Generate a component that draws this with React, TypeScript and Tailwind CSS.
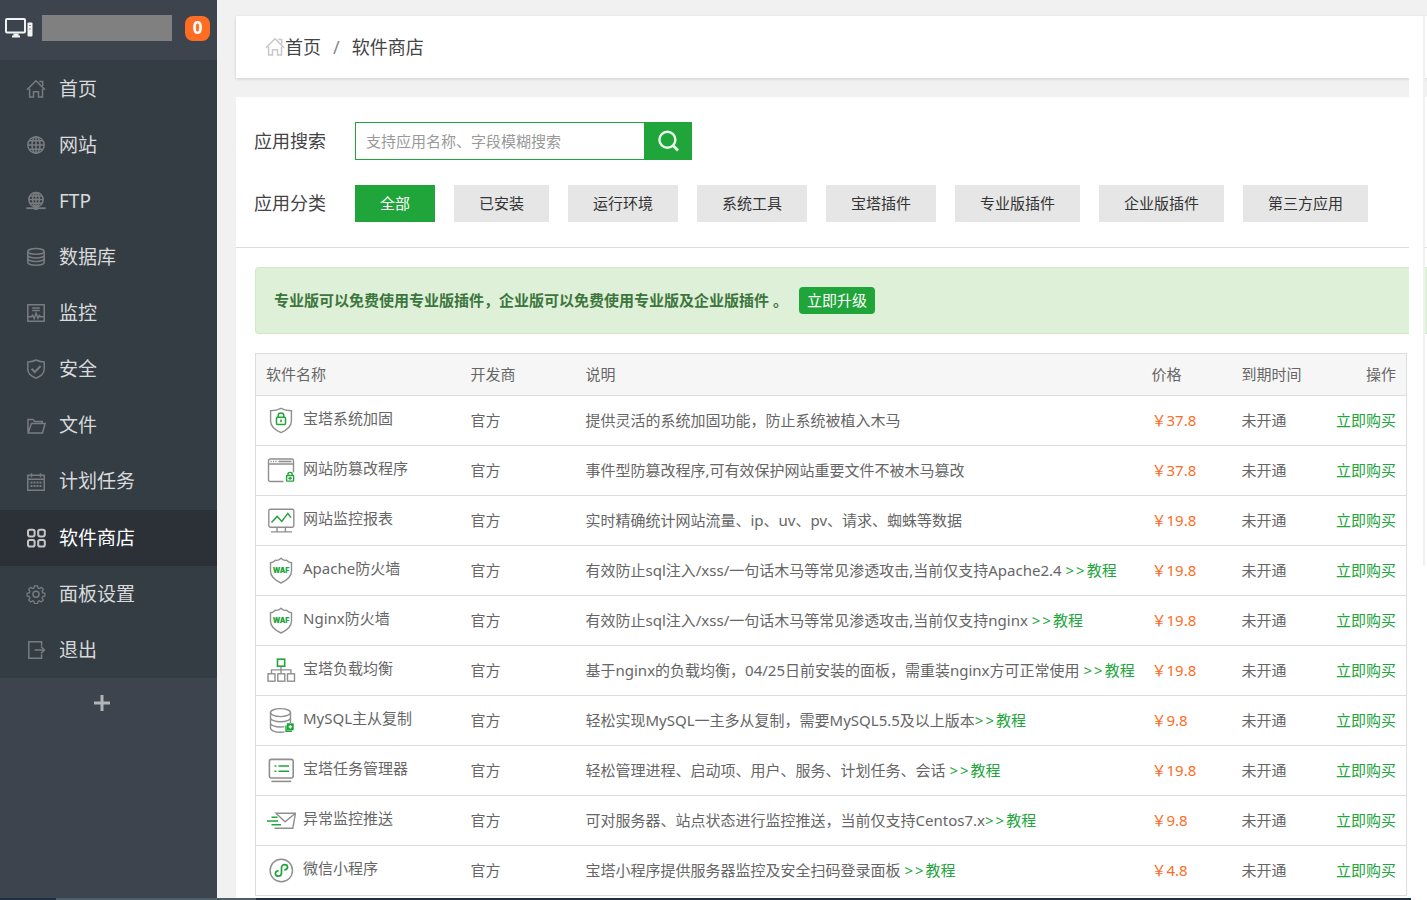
import type { ReactNode } from "react";

type IconProps = { children: ReactNode; className?: string };

function NavIcon({ children, className = "" }: IconProps) {
  return (
    <svg
      viewBox="0 0 20 20"
      width="20"
      height="20"
      fill="none"
      stroke="currentColor"
      strokeWidth="1.5"
      aria-hidden="true"
      className={`shrink-0 ${className}`}
    >
      {children}
    </svg>
  );
}

function HomeGlyph() {
  return (
    <path d="M1 10.800 10 1.800l9 9M13.300 2.500h3.400v4.600M3.600 9.800v8.300h3.900v-5.300h5v5.300h4V9.800" />
  );
}

function GlobeGlyph() {
  return (
    <>
      <circle cx="10" cy="10" r="8.2" />
      <ellipse cx="10" cy="10" rx="4" ry="8.2" />
      <path d="M10 1.800v16.400M1.800 10h16.400M3 5.800h14M3 14.200h14" />
    </>
  );
}

const navItems: { label: string; icon: ReactNode; active?: boolean }[] = [
  { label: "首页", icon: <HomeGlyph /> },
  { label: "网站", icon: <GlobeGlyph /> },
  {
    label: "FTP",
    icon: (
      <>
        <circle cx="10" cy="8.6" r="7.2" />
        <ellipse cx="10" cy="8.6" rx="3.3" ry="7.2" />
        <path d="M10 1.4v14.4M2.800 8.600h14.400M4 5h12M4 12.200h12" />
        <path d="M.4 17.200h19.200" strokeWidth="1.8" />
        <path d="M8.200 17.200h3.600" strokeWidth="3.4" />
      </>
    ),
  },
  {
    label: "数据库",
    icon: (
      <>
        <ellipse cx="10" cy="4.400" rx="8.200" ry="2.800" />
        <path d="M1.800 4.400v10.800c0 1.700 3.700 3 8.200 3s8.200-1.300 8.200-3V4.400M1.800 8c0 1.700 3.700 3 8.200 3s8.200-1.300 8.200-3M1.800 11.600c0 1.700 3.700 3 8.200 3s8.200-1.300 8.200-3" />
      </>
    ),
  },
  {
    label: "监控",
    icon: (
      <>
        <path d="M1.800 1.800h16.400v16.400H1.800zM6.200 5h7.600M6.200 7.400h7.600" />
        <path d="M2 13.800h3.400l1.200-1.600 1.600 3.400 1.900-5.400 1.900 5 1.400-2.600 1 1.200H18" />
      </>
    ),
  },
  {
    label: "安全",
    icon: (
      <>
        <path d="M10 1c2.400 1.300 5.300 1.900 8.200 1.900V10c0 4.200-3 7.200-8.200 9.200C4.800 17.200 1.800 14.200 1.800 10V2.900C4.700 2.900 7.600 2.300 10 1z" />
        <path d="m5.600 9.800 3.200 3.200 5.800-6" strokeWidth="2" />
      </>
    ),
  },
  {
    label: "文件",
    icon: (
      <path d="M2 16.600V3.400h5l1.800 2h7.400v2.200M2.200 17 5.400 7.600h13.700L16.500 17z" />
    ),
  },
  {
    label: "计划任务",
    icon: (
      <>
        <path d="M1.800 3.300h16.400v14.900H1.800zM1.800 7.200h16.400M5.500 1.200v4M14.500 1.200v4" />
        <path d="M4.500 10.500h11M4.500 14h11" strokeWidth="2" strokeDasharray="2 1" />
      </>
    ),
  },
  {
    label: "软件商店",
    active: true,
    icon: (
      <g strokeWidth="2">
        <rect x="2" y="1.800" width="6.600" height="6.600" rx="1.800" />
        <rect x="12.200" y="1.800" width="6.600" height="6.600" rx="1.800" />
        <rect x="2" y="12" width="6.600" height="6.600" rx="1.800" />
        <rect x="12.200" y="12" width="6.600" height="6.600" rx="1.800" />
      </g>
    ),
  },
  {
    label: "面板设置",
    icon: (
      <>
        <path
          d="M8.500 1.800h3l.5 2.200 1.300.6 2-1.200 2 2-1.200 2 .5 1.300 2.200.6v2.800l-2.200.6-.5 1.300 1.200 2-2 2-2-1.200-1.300.6-.5 2.200h-3L8 17.400l-1.300-.6-2 1.200-2-2 1.200-2-.5-1.300-2.200-.6V9.300l2.200-.6.5-1.300-1.200-2 2-2 2 1.200L8 4z"
          strokeWidth="1.300"
        />
        <circle cx="10" cy="10.200" r="3" />
      </>
    ),
  },
  {
    label: "退出",
    icon: (
      <path d="M15.600 5.800V1.800H2.800v16.400h12.800v-4M8.600 10H18M15 6.600 18.400 10 15 13.400" />
    ),
  },
];

const categories = [
  "全部",
  "已安装",
  "运行环境",
  "系统工具",
  "宝塔插件",
  "专业版插件",
  "企业版插件",
  "第三方应用",
];

const shield = (
  <path d="M15 2.400c3.200 1.800 6.800 2.400 10.400 2.400V15c0 5.200-4 8.800-10.400 11.600C8.600 23.800 4.600 20.200 4.600 15V4.800C8.200 4.800 11.800 4.200 15 2.400z" />
);

const wafIcon = (
  <>
    <path d="M15 2.200c1.800 1.800 3.400 2.600 5.600 2 1.500 1.600 2.900 2.400 4.900 2.600V15c0 5.600-4 9-10.500 12C8.500 24 4.500 20.600 4.500 15V6.800c2-.2 3.400-1 4.900-2.600 2.200.6 3.800-.2 5.600-2z" />
    <text
      x="15"
      y="17"
      textAnchor="middle"
      fontFamily="Inter, sans-serif"
      fontSize="7"
      fontWeight="900"
      fill="#20a53a"
      stroke="none"
    >
      WAF
    </text>
  </>
);

const apps: {
  name: string;
  desc: string;
  tutorial?: boolean;
  price: string;
  icon: ReactNode;
}[] = [
  {
    name: "宝塔系统加固",
    desc: "提供灵活的系统加固功能，防止系统被植入木马",
    price: "37.8",
    icon: (
      <>
        {shield}
        <g stroke="#20a53a" strokeWidth="1.500">
          <rect x="10.500" y="11.200" width="9" height="7.400" rx="1" />
          <path d="M12.200 11V9.600c0-3.400 5.600-3.400 5.600 0V11M15 13.600v2.600" />
        </g>
      </>
    ),
  },
  {
    name: "网站防篡改程序",
    desc: "事件型防篡改程序,可有效保护网站重要文件不被木马篡改",
    price: "37.8",
    icon: (
      <>
        <path d="M17.500 25.500H4.300a1.800 1.800 0 0 1-1.800-1.800V4.800c0-1 .8-1.800 1.800-1.800h21.400c1 0 1.800.8 1.800 1.800v11.500M2.500 8h25" />
        <path d="M4.500 5.500h7" strokeDasharray="1.200 1.200" />
        <path d="M12.500 5.500h13" strokeWidth="1.600" />
        <g stroke="#20a53a">
          <rect x="20.600" y="19.500" width="7" height="5.600" rx=".6" />
          <path d="M22 19.500V18c0-2.200 4.200-2.200 4.200 0v1.500M22.400 22.300h3.400M24.100 21v2.800" />
        </g>
      </>
    ),
  },
  {
    name: "网站监控报表",
    desc: "实时精确统计网站流量、ip、uv、pv、请求、蜘蛛等数据",
    price: "19.8",
    icon: (
      <>
        <rect x="2.800" y="3.200" width="25" height="18" rx="1.600" />
        <path d="M11 21.200v4.300M19.400 21.200v4.300M5 25.900h21" />
        <path d="m5.500 16.400 5.700-6 4.600 5 6-8L25 11.600" stroke="#20a53a" strokeWidth="1.500" />
      </>
    ),
  },
  {
    name: "Apache防火墙",
    desc: "有效防止sql注入/xss/一句话木马等常见渗透攻击,当前仅支持Apache2.4 ",
    tutorial: true,
    price: "19.8",
    icon: wafIcon,
  },
  {
    name: "Nginx防火墙",
    desc: "有效防止sql注入/xss/一句话木马等常见渗透攻击,当前仅支持nginx ",
    tutorial: true,
    price: "19.8",
    icon: wafIcon,
  },
  {
    name: "宝塔负载均衡",
    desc: "基于nginx的负载均衡，04/25日前安装的面板，需重装nginx方可正常使用 ",
    tutorial: true,
    price: "19.8",
    icon: (
      <>
        <path d="M15 10.500v7M5.500 17.500v-3.600h19.400v3.600" />
        <rect x="2" y="17.800" width="7" height="7.400" />
        <rect x="11.800" y="17.800" width="7" height="7.400" />
        <rect x="21.500" y="17.800" width="7" height="7.400" />
        <rect x="11.500" y="3.200" width="7.200" height="7" stroke="#20a53a" strokeWidth="1.600" />
      </>
    ),
  },
  {
    name: "MySQL主从复制",
    desc: "轻松实现MySQL一主多从复制，需要MySQL5.5及以上版本",
    tutorial: true,
    price: "9.8",
    icon: (
      <>
        <ellipse cx="14.500" cy="6.600" rx="10" ry="4" />
        <path d="M4.500 6.600v15.400c0 2.400 4.500 4.300 10 4.300 1.500 0 2.800-.1 4-.4M24.500 6.600V17M4.500 11.800c0 2.200 4.500 4 10 4s10-1.800 10-4M4.500 17c0 2.200 4.500 4 10 4 1.500 0 2.800-.1 4-.4" />
        <path d="M21.500 18h5.500v5.500h-5.500z" fill="#20a53a" stroke="#20a53a" />
        <path d="M20 19.500v5.800h6" stroke="#20a53a" />
        <path d="M24.300 19.200v3.200M22.700 20.800h3.200" stroke="#fff" />
      </>
    ),
  },
  {
    name: "宝塔任务管理器",
    desc: "轻松管理进程、启动项、用户、服务、计划任务、会话 ",
    tutorial: true,
    price: "19.8",
    icon: (
      <>
        <rect x="3.400" y="3.400" width="23.800" height="18.600" rx="2" strokeWidth="1.600" />
        <path d="M5.400 25.400h19.800" strokeWidth="1.600" />
        <path d="M8.600 10h1.800M12.500 10H23M8.600 15.200h1.800M12.500 15.200H23" stroke="#20a53a" strokeWidth="1.600" />
      </>
    ),
  },
  {
    name: "异常监控推送",
    desc: "可对服务器、站点状态进行监控推送，当前仅支持Centos7.x",
    tutorial: true,
    price: "9.8",
    icon: (
      <>
        <path d="M8.500 22.200h18.300l2.700-15H10l9 8.600 10.500-8.600" />
        <path d="M5.500 11.200h6M1 15h11M5.500 18.800h9.500" stroke="#20a53a" strokeWidth="1.500" />
      </>
    ),
  },
  {
    name: "微信小程序",
    desc: "宝塔小程序提供服务器监控及安全扫码登录面板 ",
    tutorial: true,
    price: "4.8",
    icon: (
      <>
        <circle cx="15.300" cy="14.500" r="11.200" />
        <path
          d="M18.300 14c4.800-.6 3.800-5.400.4-5.400-2 0-3.200 1.400-3.200 3V17c0 1.800-1.200 3.200-3.200 3.200-3.600 0-4.200-5 .2-5.400"
          stroke="#20a53a"
          strokeWidth="1.700"
        />
      </>
    ),
  },
];

function Sidebar() {
  return (
    <aside className="flex w-[217px] shrink-0 flex-col bg-[#3d444d]">
      <div className="flex h-[60px] items-center pb-1 pl-1">
        <svg viewBox="0 0 30 22" width="30" height="22" fill="none" stroke="#f1f3f4" aria-hidden="true">
          <rect x="2" y="2" width="19" height="13.500" rx="1" strokeWidth="2" />
          <path d="M8 19.500h8M9.500 17.500h5" strokeWidth="2" />
          <rect x="23.500" y="5.500" width="5" height="14" rx="1" fill="#f1f3f4" stroke="none" />
          <path d="M25 8.500h2M26 11v2" stroke="#8b9096" />
        </svg>
        <span className="ml-2 h-[26px] w-[130px] bg-[#808080]" />
        <span className="ml-[13px] flex h-[25px] w-[25px] items-center justify-center rounded-lg bg-[#ff6c24] text-[17px] font-bold text-white">
          0
        </span>
      </div>
      <nav className="bg-[#353d44] pt-px">
        <ul className="grid h-[617px] auto-rows-fr">
          {navItems.map((item) => (
            <li key={item.label} className="grid">
              <a
                href="#"
                aria-current={item.active ? "page" : undefined}
                className={
                  item.active
                    ? "flex items-center bg-[#2c3138] pl-[26px] text-[19px] text-white"
                    : "flex items-center pl-[26px] text-[19px] text-[#d8dadb]"
                }
              >
                <NavIcon className={item.active ? "text-[#c4c6c8]" : "text-[#777c80]"}>
                  {item.icon}
                </NavIcon>
                <span className="ml-[13px]">{item.label}</span>
              </a>
            </li>
          ))}
        </ul>
      </nav>
      <button type="button" aria-label="添加" className="flex h-[50px] w-[203px] items-center justify-center">
        <svg viewBox="0 0 18 18" width="18" height="18" stroke="#b2b5b8" strokeWidth="3" aria-hidden="true">
          <path d="M9 1v16M1 9h16" />
        </svg>
      </button>
    </aside>
  );
}

function AppTable() {
  return (
    <table className="w-full table-fixed border-collapse border border-[#ddd] text-left text-[15px] text-[#666]">
      <colgroup>
        <col className="w-[205px]" />
        <col className="w-[115px]" />
        <col />
        <col className="w-[90px]" />
        <col className="w-[81px]" />
        <col className="w-[94px]" />
      </colgroup>
      <thead>
        <tr className="h-[42px] border-b border-[#ddd] bg-[#f6f6f6]">
          <th scope="col" className="pl-[10px] font-normal">软件名称</th>
          <th scope="col" className="pl-[10px] font-normal">开发商</th>
          <th scope="col" className="pl-[10px] font-normal">说明</th>
          <th scope="col" className="pl-[10px] font-normal">价格</th>
          <th scope="col" className="pl-[10px] font-normal">到期时间</th>
          <th scope="col" className="pr-[10px] text-right font-normal">操作</th>
        </tr>
      </thead>
      <tbody>
        {apps.map((app) => (
          <tr key={app.name} className="h-[50px] border-b border-[#ddd]">
            <td className="pl-[10px]">
              <div className="flex items-center gap-[7px] whitespace-nowrap">
                <svg
                  viewBox="0 0 30 30"
                  width="30"
                  height="30"
                  fill="none"
                  stroke="#8f8f8f"
                  strokeWidth="1.400"
                  aria-hidden="true"
                  className="shrink-0"
                >
                  {app.icon}
                </svg>
                <span className="pb-1">{app.name}</span>
              </div>
            </td>
            <td className="pl-[10px]">官方</td>
            <td className="whitespace-nowrap pl-[10px]">
              {app.desc}
              {app.tutorial && (
                <a href="#" className="text-[#20a53a]">
                  <span className="mr-0.5">&gt;</span>
                  <span className="mr-0.5">&gt;</span>
                  教程
                </a>
              )}
            </td>
            <td className="whitespace-nowrap pl-[10px] text-[#fc6d26]">￥{app.price}</td>
            <td className="pl-[10px]">未开通</td>
            <td className="pr-[10px] text-right">
              <a href="#" className="text-[#20a53a]">
                立即购买
              </a>
            </td>
          </tr>
        ))}
      </tbody>
    </table>
  );
}

export default function App() {
  return (
    <div className="relative flex h-screen overflow-hidden bg-[#f1f1f1] font-['Noto_Sans','Noto_Sans_CJK_SC',sans-serif]">
      <Sidebar />
      <main className="flex min-w-0 flex-1 flex-col pl-[19px] pt-4">
        <nav className="flex h-[62px] shrink-0 items-center bg-white pl-[29px] text-[18px] text-[#444] shadow-[0_1px_3px_rgba(0,0,0,0.15)]">
          <NavIcon className="text-[#c8c8c8]">
            <HomeGlyph />
          </NavIcon>
          <a href="#">首页</a>
          <span className="px-3 text-[#888]">/</span>
          <span>软件商店</span>
        </nav>

        <section className="mt-[19px] flex-1 bg-white">
          <div className="flex flex-col gap-[25px] border-b border-[#ddd] py-[25px] pl-[18px]">
            <div className="flex items-center">
              <label htmlFor="app-search" className="w-[101px] text-[18px] text-[#444]">
                应用搜索
              </label>
              <input
                id="app-search"
                type="text"
                placeholder="支持应用名称、字段模糊搜索"
                className="h-[38px] w-[289px] border border-r-0 border-[#20a53a] bg-white px-[10px] text-[15px] text-[#444] outline-none placeholder:text-[#999]"
              />
              <button
                type="button"
                aria-label="搜索"
                className="flex h-[38px] w-12 items-center justify-center bg-[#20a53a]"
              >
                <svg viewBox="0 0 22 22" width="22" height="22" fill="none" stroke="#e9f6eb" strokeWidth="2.400" aria-hidden="true">
                  <circle cx="10.400" cy="9.800" r="8" />
                  <path d="m16 15.400 5 5" strokeWidth="2.800" />
                </svg>
              </button>
            </div>
            <div className="flex items-center">
              <span className="w-[101px] text-[18px] text-[#444]">应用分类</span>
              <div className="flex gap-[19px]">
                {categories.map((name, i) => (
                  <button
                    key={name}
                    type="button"
                    className={
                      i === 0
                        ? "h-[37px] bg-[#20a53a] px-[25px] text-[15px] text-white"
                        : "h-[37px] bg-[#e6e6e6] px-[25px] text-[15px] text-[#333]"
                    }
                  >
                    {name}
                  </button>
                ))}
              </div>
            </div>
          </div>

          <div className="ml-[19px] mt-[19px] flex h-[67px] items-center rounded-l border border-r-0 border-[#d0e9c6] bg-[#dff0d8] pl-[18px] text-[15px] text-[#3c763d]">
            <strong>专业版可以免费使用专业版插件，企业版可以免费使用专业版及企业版插件 。</strong>
            <button
              type="button"
              className="ml-[11px] flex h-[27px] items-center rounded bg-[#20a53a] px-2 text-[15px] text-white"
            >
              立即升级
            </button>
          </div>

          <div className="ml-[19px] mr-5 mt-[19px]">
            <AppTable />
          </div>
        </section>
      </main>

      {/* Scroll track over the right edge of the content */}
      <div className="absolute right-0.5 top-4 h-[550px] w-4 border-r-2 border-[#f1f1f1] bg-white" />

      {/* Horizontal scrollbar along the bottom edge */}
      <div className="absolute bottom-0 left-0 right-4 flex h-0.5 bg-[#1e2f45]">
        <span className="ml-14 w-[200px] bg-[#4c5f68]" />
      </div>
    </div>
  );
}
